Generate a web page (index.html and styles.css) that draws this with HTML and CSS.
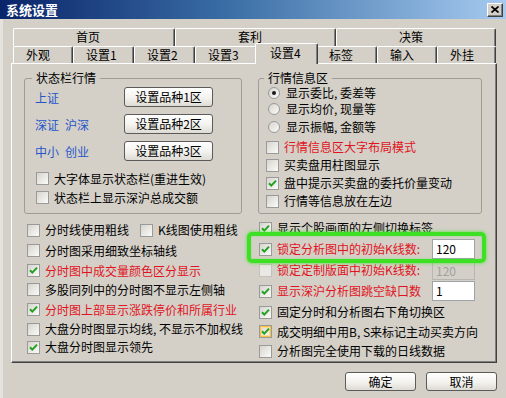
FILE: index.html
```html
<!DOCTYPE html>
<html lang="zh-CN">
<head>
<meta charset="utf-8">
<title>系统设置</title>
<link rel="stylesheet" href="styles.css">
</head>
<body>
<div class="window">
  <div class="titlebar">
    <span class="title">系统设置</span>
    <span class="close"><svg width="8" height="7" viewBox="0 0 8 7"><path d="M0.5 0.5L7.5 6.5M7.5 0.5L0.5 6.5" stroke="#000" stroke-width="1.7"/></svg></span>
  </div>
  <div class="client">
    <div class="tabrow">
      <div class="tab top w162">首页</div>
      <div class="tab top w161">套利</div>
      <div class="tab top w160">决策</div>
    </div>
    <div class="tabrow">
      <div class="tab w60">外观</div>
      <div class="tab w61">设置1</div>
      <div class="tab w61">设置2</div>
      <div class="tab w62">设置3</div>
      <div class="tab sel">设置4</div>
      <div class="tab w61">标签</div>
      <div class="tab w60">输入</div>
      <div class="tab w59">外挂</div>
    </div>
    <div class="panel">
      <div class="groups">
        <fieldset class="group g1">
          <legend>状态栏行情</legend>
          <div class="mkt first"><span class="mlabel">上证</span><button class="btn bset">设置品种1区</button></div>
          <div class="mkt"><span class="mlabel">深证&ensp;沪深</span><button class="btn bset">设置品种2区</button></div>
          <div class="mkt"><span class="mlabel">中小&ensp;创业</span><button class="btn bset">设置品种3区</button></div>
          <div class="chk g1c first h19"><span class="cb"></span>大字体显示状态栏(重进生效)</div>
          <div class="chk g1c h19"><span class="cb"></span>状态栏上显示深沪总成交额</div>
        </fieldset>
        <fieldset class="group g2">
          <legend>行情信息区</legend>
          <div class="chk rad h16"><span class="rb on"></span>显示委比, 委差等</div>
          <div class="chk rad h16"><span class="rb"></span>显示均价, 现量等</div>
          <div class="chk rad h16 mt2"><span class="rb"></span>显示振幅, 金额等</div>
          <div class="chk g2c h18 mt3 red"><span class="cb"></span>行情信息区大字布局模式</div>
          <div class="chk g2c h18"><span class="cb"></span>买卖盘用柱图显示</div>
          <div class="chk g2c h18"><span class="cb"><svg class="tick" viewBox="0 0 11 11"><path d="M2 5.2L4.3 7.6L9 2.6"/></svg></span>盘中提示买卖盘的委托价量变动</div>
          <div class="chk g2c h18"><span class="cb"></span>行情等信息放在左边</div>
        </fieldset>
      </div>
      <div class="lower">
        <div class="col left">
          <div class="chk h20"><span class="pair"><span class="cb"></span>分时线使用粗线</span><span class="cb"></span>K线图使用粗线</div>
          <div class="chk h21"><span class="cb"></span>分时图采用细致坐标轴线</div>
          <div class="chk h19 red"><span class="cb"><svg class="tick" viewBox="0 0 11 11"><path d="M2 5.2L4.3 7.6L9 2.6"/></svg></span>分时图中成交量颜色区分显示</div>
          <div class="chk h19"><span class="cb"></span>多股同列中的分时图不显示左侧轴</div>
          <div class="chk h21 red"><span class="cb"><svg class="tick" viewBox="0 0 11 11"><path d="M2 5.2L4.3 7.6L9 2.6"/></svg></span>分时图上部显示涨跌停价和所属行业</div>
          <div class="chk h18"><span class="cb"></span>大盘分时图显示均线, 不显示不加权线</div>
          <div class="chk h18"><span class="cb"><svg class="tick" viewBox="0 0 11 11"><path d="M2 5.2L4.3 7.6L9 2.6"/></svg></span>大盘分时图显示领先</div>
        </div>
        <div class="col right">
          <div class="chk h20"><span class="cb"><svg class="tick" viewBox="0 0 11 11"><path d="M2 5.2L4.3 7.6L9 2.6"/></svg></span>显示个股画面的左侧切换标签</div>
          <div class="chk h22 red"><span class="cb"><svg class="tick" viewBox="0 0 11 11"><path d="M2 5.2L4.3 7.6L9 2.6"/></svg></span><span class="flabel">锁定分析图中的初始K线数:</span><span class="field">120</span></div>
          <div class="chk h20 red"><span class="cb dis"></span><span class="flabel">锁定定制版面中初始K线数:</span><span class="field off">120</span></div>
          <div class="chk h22 red"><span class="cb"><svg class="tick" viewBox="0 0 11 11"><path d="M2 5.2L4.3 7.6L9 2.6"/></svg></span><span class="flabel">显示深沪分析图跳空缺口数</span><span class="field">1</span></div>
          <div class="chk h20"><span class="cb"><svg class="tick" viewBox="0 0 11 11"><path d="M2 5.2L4.3 7.6L9 2.6"/></svg></span>固定分时和分析图右下角切换区</div>
          <div class="chk h19"><span class="cb hot"><svg class="tick" viewBox="0 0 11 11"><path d="M2 5.2L4.3 7.6L9 2.6"/></svg></span>成交明细中用B, S来标记主动买卖方向</div>
          <div class="chk h20"><span class="cb"></span>分析图完全使用下载的日线数据</div>
        </div>
      </div>
    </div>
    <div class="actions">
      <button class="btn bact">确定</button>
      <button class="btn bact">取消</button>
    </div>
  </div>
  <div class="highlight"></div>
</div>
</body>
</html>
```

FILE: styles.css
```css
* { box-sizing: border-box; margin: 0; padding: 0; }
html, body { width: 506px; height: 398px; overflow: hidden; background: #d4d0c8; }
body {
  font-family: "Noto Sans CJK SC", "Noto Sans", sans-serif;
  font-size: 12px;
  line-height: 14px;
  color: #000;
}
.window { position: relative; width: 506px; height: 398px; background: #d4d0c8; }

.titlebar {
  height: 19px;
  background: linear-gradient(to right, #0a246a 0%, #3a6ea5 45%, #a6caf0 100%);
  display: flex;
  align-items: center;
  justify-content: space-between;
  padding: 0 3px 0 6px;
}
.title { color: #fff; font-weight: 700; font-size: 13px; line-height: 15px; }
.close {
  width: 16px; height: 14px;
  background: #d4d0c8;
  border: 1px solid;
  border-color: #fff #404040 #404040 #fff;
  box-shadow: inset -1px -1px #808080;
  display: flex; align-items: center; justify-content: center;
}

.client { padding-top: 9px; height: 379px; box-shadow: inset 3px 0 #e4e2dc; }

.tabrow { display: flex; align-items: flex-start; margin-left: 13px; }
.tab {
  height: 17px;
  padding-left: 12px;
  border-top: 1px solid #fff;
  border-left: 1px solid #fff;
  border-right: 1px solid #404040;
  box-shadow: inset -1px 0 #808080;
  border-radius: 2px 2px 0 0;
  line-height: 15px;
  background: #d4d0c8;
  white-space: nowrap;
}
.tab.top { height: 18px; padding-left: 62px; line-height: 16px; }
.w162 { width: 162px; }
.w161 { width: 161px; }
.w160 { width: 160px; }
.w62 { width: 62px; }
.w61 { width: 61px; }
.w60 { width: 60px; }
.w59 { width: 59px; }
.tab.sel {
  position: relative;
  z-index: 2;
  width: 63px;
  height: 21px;
  margin: -3px -2px -1px -2px;
  padding-left: 14px;
  line-height: 18px;
}

.panel {
  width: 486px;
  height: 300px;
  margin-left: 11px;
  border: 1px solid;
  border-color: #fff #404040 #404040 #fff;
  box-shadow: inset -1px -1px #808080;
}

.groups { display: flex; align-items: flex-start; margin: 7px 0 0 12px; }
.group {
  height: 143px;
  border: 1px solid #a09d96;
  border-radius: 3px;
  padding: 0;
  min-width: 0;
}
.g1 { width: 218px; }
.g2 { width: 224px; margin-left: 16px; }
.group legend { padding: 0 4px; line-height: 14px; }
.g1 legend { margin-left: 7px; }
.g2 legend { margin-left: 5px; }

.mkt { display: flex; align-items: center; height: 20px; margin-top: 7px; padding-left: 10px; }
.mkt.first { margin-top: 2px; }
.mlabel { width: 89px; color: #2456c8; padding-top: 2px; }

.btn {
  font: inherit;
  color: #000;
  border: 1px solid #5b5b5b;
  border-radius: 3px;
  background: linear-gradient(#ffffff, #f3f2ee 55%, #dddbd3);
  display: flex; align-items: center; justify-content: center;
}
.bset { width: 89px; height: 20px; }

.chk { display: flex; align-items: center; white-space: nowrap; }
.h16 { height: 16px; }
.h18 { height: 18px; }
.h19 { height: 19px; }
.h20 { height: 20px; }
.h21 { height: 21px; }
.h22 { height: 22px; }
.mt2 { margin-top: 2px; }
.mt3 { margin-top: 3px; }
.g1c { margin-left: 11px; }
.g1c.first { margin-top: 8px; }
.rad { margin-left: 9px; }
.g2c { margin-left: 7px; }
.red { color: #e0141e; }

.cb {
  flex: none;
  width: 13px; height: 13px;
  margin-right: 5px;
  border: 1px solid #9a9a9a;
  background: linear-gradient(135deg, #d6d4cd, #fbfbf9);
  display: flex; align-items: center; justify-content: center;
}
.cb.dis { border-color: #c4c2bc; background: #e9e8e4; }
.cb.hot { box-shadow: inset 0 0 0 1px #f6c04a, inset 0 0 0 2px #fbe09a; }
.tick { width: 11px; height: 11px; }
.tick path { fill: none; stroke: #21a121; stroke-width: 2; }

.rb {
  flex: none;
  width: 12px; height: 12px;
  margin-right: 6px;
  border-radius: 50%;
  border: 1px solid #9a9a9a;
  background: linear-gradient(135deg, #d6d4cd, #fbfbf9);
  display: flex; align-items: center; justify-content: center;
}
.rb.on::after { content: ""; width: 4px; height: 4px; border-radius: 50%; background: #1a1a1a; }

.lower { display: flex; align-items: flex-start; margin-top: 4px; }
.col.left { width: 232px; margin-left: 15px; padding-top: 2px; }
.col.right { width: 230px; }
.pair { display: flex; align-items: center; width: 113px; }

.flabel { width: 155px; }
.field {
  width: 43px; height: 20px;
  border: 1px solid #9ea3a8;
  background: #fff;
  padding: 0 3px;
  line-height: 18px;
  color: #000;
}
.field.off { background: #d4d0c8; color: #a0a0a0; border-color: #b8b6b0; height: 19px; }

.actions { display: flex; justify-content: flex-end; gap: 10px; margin: 9px 9px 0 0; }
.bact { width: 71px; height: 19px; }

.highlight {
  position: absolute;
  left: 247px; top: 232px;
  width: 239px; height: 31px;
  border: 4px solid #3de024;
  border-radius: 5px;
  box-shadow: 0 0 3px 1px rgba(70, 230, 40, 0.55), inset 0 0 2px rgba(70, 230, 40, 0.5);
}
```
